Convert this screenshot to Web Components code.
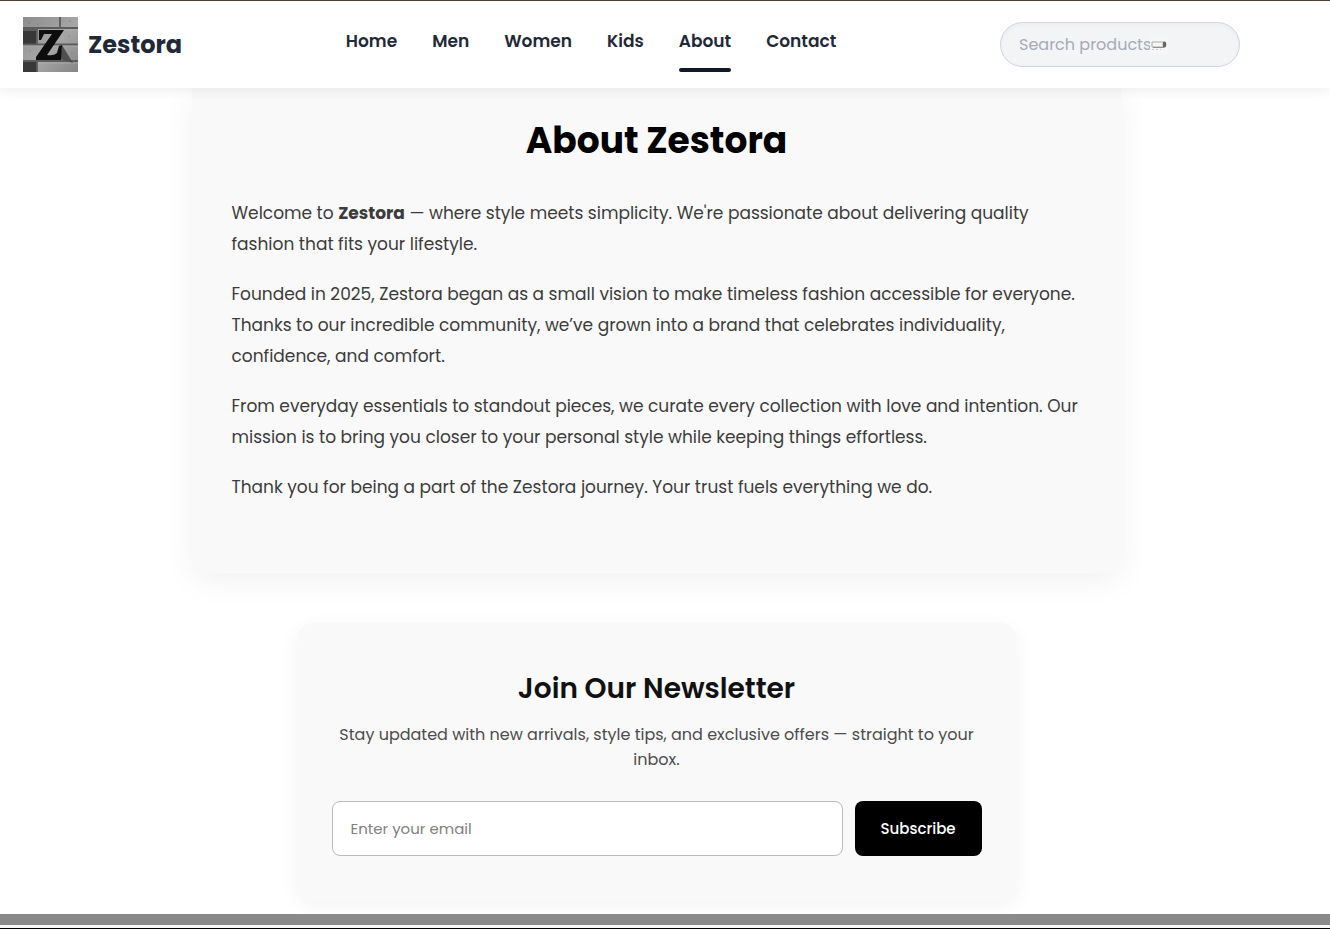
<!DOCTYPE html>
<html lang="en">
<head>
<meta charset="utf-8">
<meta name="viewport" content="width=device-width, initial-scale=1">
<title>About Zestora</title>
<style>
  * { box-sizing: border-box; }
  body {
    margin: 0;
    background: #fff;
    color: #333;
    font-family: Poppins, Inter, "Noto Sans", sans-serif;
  }
</style>
</head>
<body>
<zs-page>
  <zs-header slot="header">
    <zs-logo slot="brand"></zs-logo>
    <zs-nav-link href="#home">Home</zs-nav-link>
    <zs-nav-link href="#men">Men</zs-nav-link>
    <zs-nav-link href="#women">Women</zs-nav-link>
    <zs-nav-link href="#kids">Kids</zs-nav-link>
    <zs-nav-link href="#about" active>About</zs-nav-link>
    <zs-nav-link href="#contact">Contact</zs-nav-link>
    <zs-search slot="search"></zs-search>
  </zs-header>
  <zs-about>
    <span slot="title">About Zestora</span>
    <p>Welcome to <strong>Zestora</strong> — where style meets simplicity. We're passionate about delivering quality fashion that fits your lifestyle.</p>
    <p>Founded in 2025, Zestora began as a small vision to make timeless fashion accessible for everyone. Thanks to our incredible community, we’ve grown into a brand that celebrates individuality, confidence, and comfort.</p>
    <p>From everyday essentials to standout pieces, we curate every collection with love and intention. Our mission is to bring you closer to your personal style while keeping things effortless.</p>
    <p>Thank you for being a part of the Zestora journey. Your trust fuels everything we do.</p>
  </zs-about>
  <zs-newsletter>
    <span slot="title">Join Our Newsletter</span>
    <span slot="text">Stay updated with new arrivals, style tips, and exclusive offers — straight to your inbox.</span>
  </zs-newsletter>
  <zs-footer slot="footer"></zs-footer>
</zs-page>

<script>
const define = (name, html, setup) => {
  const template = document.createElement('template');
  template.innerHTML = '<style>*{box-sizing:border-box}</style>' + html;
  customElements.define(name, class extends HTMLElement {
    constructor() {
      super();
      this.attachShadow({ mode: 'open' }).append(template.content.cloneNode(true));
    }
    connectedCallback() { if (setup) setup(this, this.shadowRoot); }
  });
};

define('zs-page', `
  <style>
    :host { display: flex; flex-direction: column; min-height: 100vh; border-top: 1px solid #4e3f39; }
    main { flex: 1; display: flex; flex-direction: column; align-items: center; gap: 50px; padding: 0 17px 12px 0; overflow: hidden; }
  </style>
  <slot name="header"></slot>
  <main><slot></slot></main>
  <slot name="footer"></slot>`);

define('zs-header', `
  <style>
    :host { display: block; position: relative; z-index: 1; background: #fff; box-shadow: 0 2px 12px rgba(0,0,0,.08); }
    header { display: flex; align-items: center; justify-content: space-between; height: 87px; padding: 0 90px 0 23px; }
    nav { display: flex; gap: 35px; }
  </style>
  <header>
    <slot name="brand"></slot>
    <nav aria-label="Main"><slot></slot></nav>
    <slot name="search"></slot>
  </header>`);

define('zs-logo', `
  <style>
    :host { display: block; }
    a { display: flex; align-items: center; gap: 10px; color: #1f2937; text-decoration: none; font-size: 24px; line-height: 36px; font-weight: 700; }
    svg { display: block; width: 55px; height: 55px; }
  </style>
  <a href="#home">
    <svg viewBox="0 0 55 55" aria-hidden="true">
      <defs>
        <linearGradient id="brick" x1="0" y1="0" x2="1" y2="1">
          <stop offset="0" stop-color="#8d8d8d"/><stop offset=".55" stop-color="#a6a6a6"/><stop offset="1" stop-color="#858585"/>
        </linearGradient>
        <filter id="soft"><feGaussianBlur stdDeviation=".4"/></filter>
      </defs>
      <rect width="55" height="55" fill="url(#brick)"/>
      <g filter="url(#soft)">
        <path d="M0 12H13V28H0zM0 45H14V55H0z" fill="#383838"/>
        <path d="M0 11H55M0 27.500H55M0 44H55M37 0V11M14 11V28M14 44V55" fill="none" stroke="#5b5b5b" stroke-width="1.800"/>
        <path d="M0 13H13M15 13H55M0 29H55M15 46H55" fill="none" stroke="#b5b5b5" stroke-width=".6"/>
        <path d="M39 28L50 46L37 42z" fill="#505050"/>
        <path d="M16 13H41L24 38Q31 39 34 36L36 29L39 28L38 43H13V40L29 17H21L18 23H16z" fill="#0c0c0c"/>
      </g>
      <g fill="#666"><circle cx="6" cy="6" r=".6"/><circle cx="15" cy="7" r=".5"/><circle cx="47" cy="4" r=".6"/><circle cx="46" cy="19" r=".5"/><circle cx="7" cy="34" r=".5"/><circle cx="49" cy="36" r=".5"/></g>
    </svg>
    <span>Zestora</span>
  </a>`);

define('zs-nav-link', `
  <style>
    :host { display: block; }
    a { display: block; padding: 10px 0 17px; color: #1f2937; text-decoration: none; font-size: 17px; line-height: 28px; font-weight: 600; position: relative; }
    :host([active]) a::after { content: ""; position: absolute; left: 0; right: 0; bottom: 0; height: 4px; border-radius: 2px; background: #111827; }
  </style>
  <a><slot></slot></a>`, (el, root) => {
  const a = root.querySelector('a');
  a.href = el.getAttribute('href');
  if (el.hasAttribute('active')) a.setAttribute('aria-current', 'page');
});

define('zs-search', `
  <style>
    :host { display: block; position: relative; width: 240px; }
    input { display: block; width: 100%; height: 45px; padding: 0 18px; border: 1px solid #d1d5db; border-radius: 23px; background: #f3f4f6; box-shadow: inset 0 2px 4px rgba(0,0,0,.03); color: #1f2937; font: 16px/24px Poppins, Inter, sans-serif; }
    input::placeholder { color: #a5abb7; opacity: 1; }
    svg { position: absolute; left: 150px; top: 14px; width: 18px; height: 18px; pointer-events: none; }
  </style>
  <input type="search" aria-label="Search products" placeholder="Search products">
  <svg viewBox="0 0 18 18" aria-hidden="true">
    <rect width="18" height="18" fill="#f6f6f6"/>
    <path d="M2 6H14V11H2z" fill="#f6f6f4" stroke="#aaaaa6"/>
    <path d="M3 11.500H14" stroke="#92928d"/>
    <path d="M2 13.500H4M6 13.500H8M10 13.500H11" stroke="#ccc"/>
    <ellipse cx="14.500" cy="8.500" rx="1.800" ry="3" fill="#666"/>
  </svg>`);

define('zs-about', `
  <style>
    :host { display: block; width: 100%; max-width: 930px; }
    section { padding: 25px 40px 70px; border-radius: 0 0 16px 16px; background: #f9f9f9; box-shadow: 0 8px 32px rgba(0,0,0,.06); }
    h1 { margin: 0 0 29px; color: #000; font-size: 36px; line-height: 56px; font-weight: 700; text-align: center; }
    ::slotted(p) { margin: 0 0 19px; color: #3c3c3c; font-size: 17px; line-height: 31px; }
    ::slotted(p:last-of-type) { margin: 0; }
  </style>
  <section><h1><slot name="title"></slot></h1><slot></slot></section>`);

define('zs-newsletter', `
  <style>
    :host { display: block; width: 100%; max-width: 720px; }
    section { padding: 45px 35px 45px; border-radius: 16px; background: #f9f9f9; box-shadow: 0 5px 20px rgba(0,0,0,.05); text-align: center; }
    h2 { margin: 0 0 12px; color: #111; font-size: 28px; line-height: 42px; font-weight: 600; }
    p { margin: 0 0 29px; color: #4c4c4c; font-size: 16px; line-height: 25px; }
    form { display: flex; gap: 12px; }
    input { flex: 1; min-width: 0; height: 55px; padding: 0 18px; border: 1px solid #bbb; border-radius: 8px; background: #fff; font: 15px/24px Poppins, Inter, sans-serif; }
    input::placeholder { color: #808080; opacity: 1; }
    button { width: 127px; height: 55px; padding: 0; border: 0; border-radius: 8px; background: #000; color: #fff; font: 500 15px/24px Poppins, Inter, sans-serif; }
  </style>
  <section>
    <h2><slot name="title"></slot></h2>
    <p><slot name="text"></slot></p>
    <form>
      <input type="email" aria-label="Email address" placeholder="Enter your email">
      <button type="button">Subscribe</button>
    </form>
  </section>`);

define('zs-footer', `
  <style>
    :host { display: block; }
    footer { height: 15px; border-top: 11px solid #8a8a8a; border-bottom: 1px solid #000; background: #f9f9f9; }
  </style>
  <footer></footer>`);
</script>
</body>
</html>
